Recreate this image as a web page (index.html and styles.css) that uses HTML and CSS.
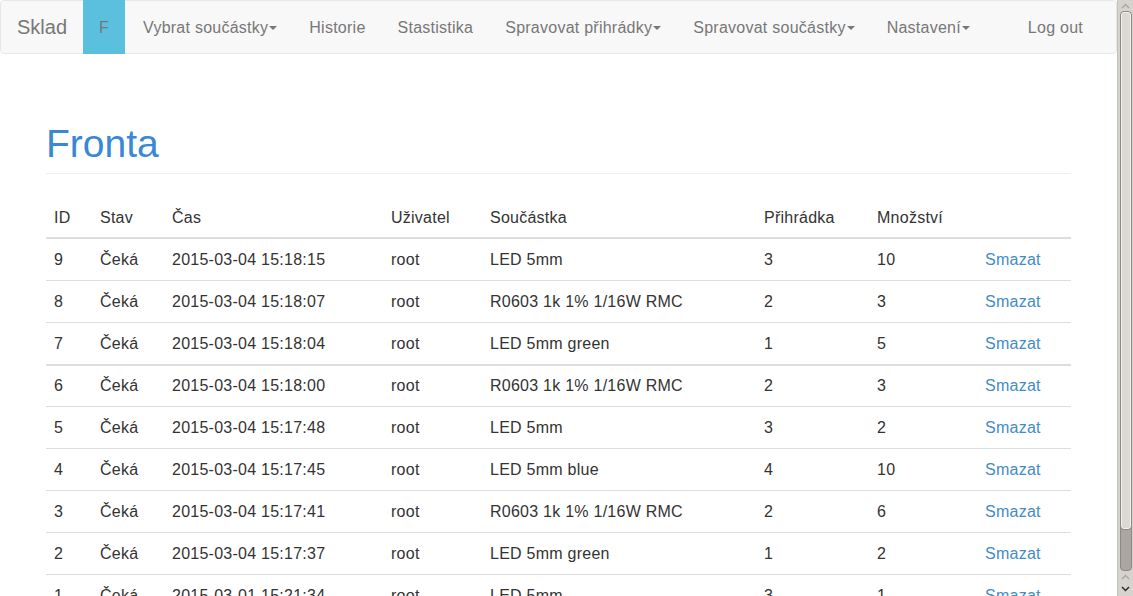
FILE: index.html
```html
<!DOCTYPE html>
<html lang="cs">
<head>
<meta charset="utf-8">
<title>Sklad - Fronta</title>
<link rel="stylesheet" href="styles.css">
</head>
<body>
<div class="page">
  <nav class="navbar">
    <a class="brand" href="#">Sklad</a>
    <a class="nav-link active" href="#">F</a>
    <a class="nav-link first" href="#">Vybrat součástky<span class="caret"></span></a>
    <a class="nav-link" href="#">Historie</a>
    <a class="nav-link" href="#">Stastistika</a>
    <a class="nav-link" href="#">Spravovat přihrádky<span class="caret"></span></a>
    <a class="nav-link" href="#">Spravovat součástky<span class="caret"></span></a>
    <a class="nav-link" href="#">Nastavení<span class="caret"></span></a>
    <a class="nav-link logout" href="#">Log out</a>
  </nav>
  <main class="container">
    <div class="page-header"><h1>Fronta</h1></div>
    <table class="table">
      <colgroup>
        <col class="c-id"><col class="c-stav"><col class="c-cas"><col class="c-user"><col class="c-part"><col class="c-box"><col class="c-qty"><col class="c-act">
      </colgroup>
      <thead>
        <tr><th>ID</th><th>Stav</th><th>Čas</th><th>Uživatel</th><th>Součástka</th><th>Přihrádka</th><th>Množství</th><th></th></tr>
      </thead>
      <tbody>
        <tr><td>9</td><td>Čeká</td><td>2015-03-04 15:18:15</td><td>root</td><td>LED 5mm</td><td>3</td><td>10</td><td><a href="#">Smazat</a></td></tr>
        <tr><td>8</td><td>Čeká</td><td>2015-03-04 15:18:07</td><td>root</td><td>R0603 1k 1% 1/16W RMC</td><td>2</td><td>3</td><td><a href="#">Smazat</a></td></tr>
        <tr><td>7</td><td>Čeká</td><td>2015-03-04 15:18:04</td><td>root</td><td>LED 5mm green</td><td>1</td><td>5</td><td><a href="#">Smazat</a></td></tr>
        <tr class="strong-line"><td>6</td><td>Čeká</td><td>2015-03-04 15:18:00</td><td>root</td><td>R0603 1k 1% 1/16W RMC</td><td>2</td><td>3</td><td><a href="#">Smazat</a></td></tr>
        <tr><td>5</td><td>Čeká</td><td>2015-03-04 15:17:48</td><td>root</td><td>LED 5mm</td><td>3</td><td>2</td><td><a href="#">Smazat</a></td></tr>
        <tr><td>4</td><td>Čeká</td><td>2015-03-04 15:17:45</td><td>root</td><td>LED 5mm blue</td><td>4</td><td>10</td><td><a href="#">Smazat</a></td></tr>
        <tr><td>3</td><td>Čeká</td><td>2015-03-04 15:17:41</td><td>root</td><td>R0603 1k 1% 1/16W RMC</td><td>2</td><td>6</td><td><a href="#">Smazat</a></td></tr>
        <tr><td>2</td><td>Čeká</td><td>2015-03-04 15:17:37</td><td>root</td><td>LED 5mm green</td><td>1</td><td>2</td><td><a href="#">Smazat</a></td></tr>
        <tr><td>1</td><td>Čeká</td><td>2015-03-01 15:21:34</td><td>root</td><td>LED 5mm</td><td>3</td><td>1</td><td><a href="#">Smazat</a></td></tr>
      </tbody>
    </table>
  </main>
</div>
<div class="scrollbar" aria-hidden="true">
  <div class="stepper">
    <svg width="9" height="6" viewBox="0 0 9 6"><polyline points="1,5 4.5,1.5 8,5" fill="none" stroke="#aaa6a2" stroke-width="1.4"/></svg>
  </div>
  <div class="trough">
    <div class="thumb"></div>
  </div>
  <div class="stepper bottom">
    <svg width="9" height="6" viewBox="0 0 9 6"><polyline points="1,5 4.5,1.5 8,5" fill="none" stroke="#aaa6a2" stroke-width="1.4"/></svg>
    <svg width="9" height="6" viewBox="0 0 9 6"><polyline points="1,1 4.5,4.5 8,1" fill="none" stroke="#2e2c2a" stroke-width="1.5"/></svg>
  </div>
</div>
</body>
</html>
```

FILE: styles.css
```css
html, body {
  margin: 0;
  padding: 0;
}
body {
  display: flex;
  align-items: flex-start;
  font-family: "Liberation Sans", Arial, sans-serif;
  font-size: 16px;
  line-height: 21px;
  letter-spacing: 0.25px;
  color: #333;
  background: #fff;
}
a {
  text-decoration: none;
}
.page {
  flex: 1 1 auto;
  min-width: 0;
}
.navbar {
  display: flex;
  align-items: stretch;
  height: 52px;
  background: #f8f8f8;
  border: 1px solid #e7e7e7;
  border-radius: 4px;
  padding-right: 17px;
}
.brand {
  display: flex;
  align-items: center;
  padding: 1px 16px 0 16px;
  font-size: 20px;
  letter-spacing: 0;
  color: #777;
}
.nav-link {
  display: flex;
  align-items: center;
  padding: 1px 16px 0;
  color: #777;
  font-size: 16px;
}
.nav-link.first {
  margin-left: 2px;
}
.nav-link.active {
  background: #5bc0de;
  color: #777;
  margin-top: -1px;
  margin-bottom: -1px;
}
.caret {
  display: inline-block;
  width: 0;
  height: 0;
  margin-left: 1px;
  border-top: 4px solid #777;
  border-left: 4px solid transparent;
  border-right: 4px solid transparent;
}
.logout {
  margin-left: auto;
}
.container {
  padding: 0 46px;
}
.page-header {
  margin: 70px 0 23px;
  padding-bottom: 9px;
  border-bottom: 1px solid #eee;
}
.page-header h1 {
  margin: 0;
  font-size: 39px;
  line-height: 40px;
  font-weight: 500;
  letter-spacing: 0;
  color: #3a87d6;
}
.table {
  width: 100%;
  border-collapse: collapse;
  table-layout: fixed;
}
.c-id { width: 46px; }
.c-stav { width: 72px; }
.c-cas { width: 219px; }
.c-user { width: 99px; }
.c-part { width: 274px; }
.c-box { width: 113px; }
.c-qty { width: 108px; }
.c-act { width: auto; }
.table th,
.table td {
  padding: 10px 8px;
  text-align: left;
  vertical-align: top;
  white-space: nowrap;
}
.table th {
  font-weight: normal;
  padding-bottom: 9px;
  border-bottom: 2px solid #ddd;
}
.table td {
  border-top: 1px solid #ddd;
}
.table tr.strong-line td {
  padding-top: 9px;
  border-top: 2px solid #ddd;
}
.table td a {
  color: #428bca;
}

/* window scrollbar of the screenshot */
.scrollbar {
  flex: 0 0 16px;
  height: 100vh;
  display: flex;
  flex-direction: column;
  background: #d6d2ce;
  border-left: 1px solid #c4c0bb;
  box-sizing: border-box;
}
.stepper {
  height: 11px;
  display: flex;
  align-items: center;
  justify-content: center;
}
.stepper.bottom {
  height: 25px;
  flex-direction: column;
  gap: 6px;
  justify-content: flex-start;
  padding-top: 3px;
  box-sizing: border-box;
}
.trough {
  flex: 1 1 auto;
  margin: 0 1px 0 2px;
  background: #aca6a1;
  border: 1px solid #8d8884;
  border-radius: 4px;
  display: flex;
  flex-direction: column;
}
.thumb {
  height: 515px;
  background: #dcd8d4;
  border: 1px solid #f3f1ef;
  border-radius: 3px;
  box-shadow: 0 1px 0 #8d8884;
}
```
